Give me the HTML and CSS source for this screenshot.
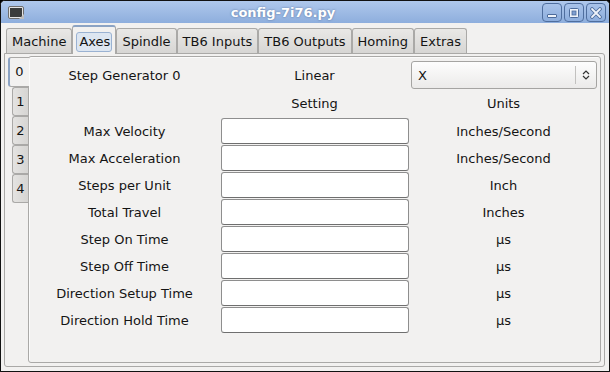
FILE: index.html
```html
<!DOCTYPE html>
<html lang="en">
<head>
    <meta charset="UTF-8">
    <title>config-7i76.py</title>
    <link rel="stylesheet" href="styles.css">
</head>
<body>
    <div class="window">
        <div class="titlebar">
            <svg class="app-icon" width="16" height="13" viewBox="0 0 16 13">
                <rect x="0.5" y="0.5" width="15" height="12" rx="1.5" fill="#e4e4e4" stroke="#6e6e6e"/>
                <rect x="2" y="2" width="12" height="9" fill="#3a3c3c"/>
                <path d="M11 13 L16 8 L16 13 Z" fill="#bdbdbd"/>
            </svg>
            <div class="title">config-7i76.py</div>
            <div class="wm-buttons">
                <span class="wm-btn">
                    <svg width="12" height="12" viewBox="0 0 12 12"><rect x="1.5" y="7.5" width="9" height="3" rx="0.5" fill="#eef3fa" stroke="#4d6c9c"/></svg>
                </span>
                <span class="wm-btn">
                    <svg width="12" height="12" viewBox="0 0 12 12"><rect x="1.5" y="1.5" width="9" height="9" rx="1" fill="#eef3fa" stroke="#4d6c9c"/><rect x="4" y="4" width="4" height="4" fill="#7f9fd0" stroke="#4d6c9c" stroke-width="0.8"/></svg>
                </span>
                <span class="wm-btn">
                    <svg width="12" height="12" viewBox="0 0 12 12"><path d="M2 2 L10 10 M10 2 L2 10" stroke="#4d6c9c" stroke-width="3.6" stroke-linecap="round"/><path d="M2 2 L10 10 M10 2 L2 10" stroke="#eef3fa" stroke-width="1.8" stroke-linecap="round"/></svg>
                </span>
            </div>
        </div>

        <div class="client">
            <div class="tabs">
                <div class="tab">Machine</div>
                <div class="tab active"><span class="focus">Axes</span></div>
                <div class="tab">Spindle</div>
                <div class="tab">TB6 Inputs</div>
                <div class="tab">TB6 Outputs</div>
                <div class="tab">Homing</div>
                <div class="tab">Extras</div>
            </div>

            <div class="notebook">
                <div class="side-tabs">
                    <div class="side-tab active">0</div>
                    <div class="side-tab">1</div>
                    <div class="side-tab">2</div>
                    <div class="side-tab">3</div>
                    <div class="side-tab">4</div>
                </div>

                <div class="page">
                    <div class="grid">
                        <div class="cell">Step Generator 0</div>
                        <div class="cell">Linear</div>
                        <div class="combo">
                            <span class="combo-text">X</span>
                            <span class="combo-arrow">
                                <svg width="8" height="12" viewBox="0 0 8 12"><path d="M1 5 L4 2 L7 5 M1 7 L4 10 L7 7" fill="none" stroke="#333" stroke-width="1.2"/></svg>
                            </span>
                        </div>

                        <div class="cell"></div>
                        <div class="cell">Setting</div>
                        <div class="cell">Units</div>

                        <div class="cell">Max Velocity</div>
                        <input class="entry" type="text">
                        <div class="cell">Inches/Second</div>

                        <div class="cell">Max Acceleration</div>
                        <input class="entry" type="text">
                        <div class="cell">Inches/Second</div>

                        <div class="cell">Steps per Unit</div>
                        <input class="entry" type="text">
                        <div class="cell">Inch</div>

                        <div class="cell">Total Travel</div>
                        <input class="entry" type="text">
                        <div class="cell">Inches</div>

                        <div class="cell">Step On Time</div>
                        <input class="entry" type="text">
                        <div class="cell">µs</div>

                        <div class="cell">Step Off Time</div>
                        <input class="entry" type="text">
                        <div class="cell">µs</div>

                        <div class="cell">Direction Setup Time</div>
                        <input class="entry" type="text">
                        <div class="cell">µs</div>

                        <div class="cell">Direction Hold Time</div>
                        <input class="entry" type="text">
                        <div class="cell">µs</div>
                    </div>
                </div>
            </div>
        </div>
    </div>
</body>
</html>
```

FILE: styles.css
```css
body {
    margin: 0;
    background-color: black;
    font-family: "DejaVu Sans", sans-serif;
    font-size: 13px;
    color: #141414;
}
.window {
    width: 610px;
    height: 372px;
    box-sizing: border-box;
    border: 1px solid #111;
    border-radius: 5px 5px 0 0;
    background-color: #f2f1f0;
    display: flex;
    flex-direction: column;
    overflow: hidden;
}
.titlebar {
    height: 22px;
    flex-shrink: 0;
    display: flex;
    align-items: center;
    padding: 0 3px 0 7px;
    background: linear-gradient(#afc8ec, #8eaedd);
}
.app-icon {
    flex-shrink: 0;
}
.title {
    flex: 1;
    text-align: center;
    color: white;
    font-weight: bold;
    font-size: 13px;
    text-shadow: 0 0 2px rgba(40, 60, 100, 0.6);
}
.wm-buttons {
    display: flex;
    gap: 2px;
    padding-top: 1px;
}
.wm-btn {
    width: 20px;
    height: 19px;
    box-sizing: border-box;
    border: 1px solid #4f6e9e;
    border-radius: 4px;
    background: linear-gradient(#a9c3e9, #8caddd);
    display: flex;
    align-items: center;
    justify-content: center;
}
.client {
    flex: 1;
    padding: 0 4px 4px 3px;
    display: flex;
    flex-direction: column;
}
.tabs {
    height: 30px;
    flex-shrink: 0;
    display: flex;
    align-items: flex-end;
    padding-left: 2px;
}
.tab {
    height: 25px;
    box-sizing: border-box;
    padding: 1px 5px 0;
    border: 1px solid #aaa9a7;
    border-bottom: none;
    border-radius: 3px 3px 0 0;
    background: linear-gradient(#e9e8e6, #d7d6d4);
    display: flex;
    align-items: center;
}
.tab.active {
    height: 29px;
    margin-bottom: -1px;
    position: relative;
    z-index: 1;
    padding: 2px 3px 0;
    background: #f2f1f0;
    border-color: #8ba3c4 #aaa9a7 transparent;
    border-top-width: 2px;
}
.focus {
    padding: 1px 1px 2px 2px;
    border: 1px solid #9ab2d2;
    border-radius: 3px;
    background-color: #dde6f1;
}
.notebook {
    flex: 1;
    display: flex;
    padding: 2px 3px 3px 3px;
    border: 1px solid #aaa9a7;
    border-radius: 0 3px 3px 3px;
}
.side-tabs {
    width: 20px;
    flex-shrink: 0;
    display: flex;
    flex-direction: column;
    align-items: flex-end;
    padding-top: 1px;
}
.side-tab {
    width: 16px;
    height: 29px;
    box-sizing: border-box;
    border: 1px solid #aaa9a7;
    border-right: none;
    border-radius: 3px 0 0 3px;
    background: linear-gradient(90deg, #e4e3e1, #d6d5d3);
    display: flex;
    align-items: center;
    justify-content: center;
}
.side-tab.active {
    width: 21px;
    height: 30px;
    margin-right: -1px;
    position: relative;
    z-index: 1;
    background: #f2f1f0;
    border-left: 2px solid #8ba3c4;
    align-items: flex-start;
    padding-top: 6px;
}
.page {
    flex: 1;
    box-sizing: border-box;
    border: 1px solid #aaa9a7;
    border-radius: 3px;
    box-shadow: inset 1px 1px 0 #fbfbfb;
}
.grid {
    display: grid;
    grid-template-columns: 191px 189px 189px;
    grid-template-rows: 28px 29px repeat(8, 27px);
    padding-top: 4px;
}
.cell {
    display: flex;
    align-items: center;
    justify-content: center;
}
.combo {
    margin: 0 1px 0 2px;
    box-sizing: border-box;
    border: 1px solid #a5a4a2;
    border-radius: 3px;
    background: linear-gradient(#fdfdfd, #ebeae9);
    display: flex;
    align-items: center;
}
.combo-text {
    flex: 1;
    padding-left: 6px;
}
.combo-arrow {
    width: 20px;
    height: 18px;
    border-left: 1px solid #c2c1bf;
    display: flex;
    align-items: center;
    justify-content: center;
}
.entry {
    width: 188px;
    height: 26px;
    margin: 0 0 1px 1px;
    box-sizing: border-box;
    border: 1px solid #8e8e8e;
    border-bottom-color: #6f6f6f;
    border-radius: 3px;
    background-color: white;
    font: inherit;
}
```
